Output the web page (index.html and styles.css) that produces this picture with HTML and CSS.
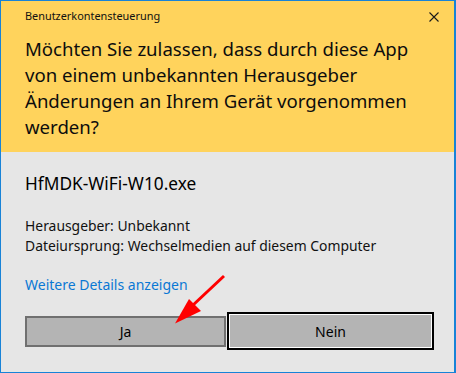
FILE: index.html
```html
<!DOCTYPE html>
<html lang="de">
<head>
<meta charset="utf-8">
<link rel="stylesheet" href="styles.css">
</head>
<body>
<div class="window">
  <div class="header">
    <div class="titlebar">
      <span class="title">Benutzerkontensteuerung</span>
      <svg class="close" width="10" height="10" viewBox="0 0 10 10"><path d="M0.5 0.5 L9.5 9.5 M9.5 0.5 L0.5 9.5" stroke="#1a1a1a" stroke-width="1.1" fill="none"/></svg>
    </div>
    <h1 class="question">Möchten Sie zulassen, dass durch diese App<br>von einem unbekannten Herausgeber<br>Änderungen an Ihrem Gerät vorgenommen<br>werden?</h1>
  </div>
  <div class="content">
    <div class="filename">HfMDK-WiFi-W10.exe</div>
    <div class="info">
      <div>Herausgeber: Unbekannt</div>
      <div>Dateiursprung: Wechselmedien auf diesem Computer</div>
    </div>
    <a class="details">Weitere Details anzeigen</a>
    <div class="buttons">
      <button class="btn btn-yes">Ja</button>
      <button class="btn btn-no"><span class="btn-inner">Nein</span></button>
    </div>
  </div>
  <svg class="arrow" width="456" height="373" viewBox="0 0 456 373">
    <line x1="224" y1="276" x2="192" y2="306" stroke="#ff0000" stroke-width="3"/>
    <polygon points="175,323.5 189,299 201,311" fill="#ff0000"/>
  </svg>
</div>
</body>
</html>
```
FILE: styles.css
```css
html, body {
  margin: 0;
  padding: 0;
  background: #ffffff;
}
body {
  font-family: "Noto Sans", "Open Sans", sans-serif;
  color: #000;
}
.window {
  position: relative;
  width: 456px;
  height: 373px;
  box-sizing: border-box;
  border: 1px solid #1883d7;
  border-right-width: 2px;
  background: #e6e6e6;
  display: flex;
  flex-direction: column;
}
.header {
  background: #ffd35c;
  height: 151px;
  padding: 0 0 0 24px;
  box-sizing: border-box;
  flex-shrink: 0;
}
.titlebar {
  display: flex;
  align-items: flex-start;
  justify-content: space-between;
  padding-top: 7px;
  padding-right: 15px;
}
.title {
  font-size: 10.9px;
  line-height: 16px;
  color: #111;
}
.close {
  display: block;
  margin-top: 4px;
}
.question {
  margin: 12px 0 0 0;
  font-weight: normal;
  font-size: 18.6px;
  line-height: 26.1px;
  white-space: nowrap;
  color: #0d0d0d;
}
.content {
  flex: 1;
  padding: 0 0 0 24px;
}
.filename {
  font-size: 17.3px;
  line-height: 24px;
  margin-top: 20px;
}
.info {
  margin-top: 20px;
  font-size: 13.9px;
  line-height: 20px;
  color: #111;
}
.details {
  display: block;
  margin-top: 19px;
  font-size: 14px;
  line-height: 20px;
  color: #0a78d4;
}
.buttons {
  display: flex;
  align-items: center;
  margin-top: 17px;
}
.btn {
  font-family: inherit;
  font-size: 14px;
  color: #000;
  background: #b4b4b4;
  padding: 0;
  box-sizing: border-box;
}
.btn-yes {
  width: 201px;
  height: 31px;
  border: 2px solid #707070;
}
.btn-no {
  width: 207px;
  height: 38px;
  margin-left: 1px;
  border: 2px solid #000000;
  padding: 1px;
  background: #ffffff;
}
.btn-inner {
  display: flex;
  align-items: center;
  justify-content: center;
  width: 100%;
  height: 100%;
  background: #b4b4b4;
}
.arrow {
  position: absolute;
  left: -1px;
  top: -1px;
  pointer-events: none;
}
```
